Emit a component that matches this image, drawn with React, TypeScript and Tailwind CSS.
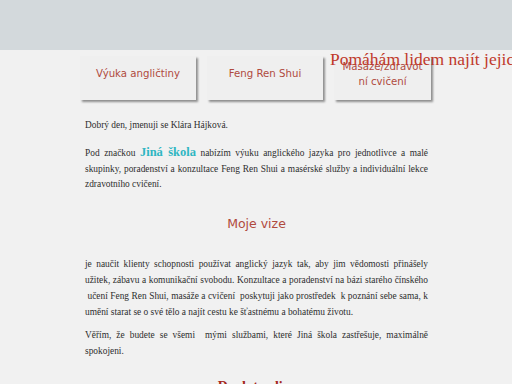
export default function App() {
  const nav = [
    { label: ['Výuka angličtiny'], w: 'w-[116px]' },
    { label: ['Feng Ren Shui'], w: 'w-[116px]' },
    { label: ['Masáže/zdravot', 'ní cvičení'], w: 'w-[97px]' },
  ];

  return (
    <div className="min-h-[384px] bg-[#f1f1f1] overflow-hidden font-['Liberation_Serif',serif]">
      <header className="h-[50px] bg-[#d3d9dc]" />

      <div className="relative">
        <nav className="flex gap-[11px] pl-[80px] pt-[6px]">
          {nav.map((item) => (
            <div
              key={item.label[0]}
              className={`${item.w} h-[44px] pb-[9px] flex flex-col items-center justify-center bg-[#efefef] shadow-[2px_2px_2px_#8f8f8f] text-center text-[10.2px] leading-[15px] text-[#b04a3e] font-['DejaVu_Sans',sans-serif]`}
            >
              {item.label.map((line) => (
                <span key={line}>{line}</span>
              ))}
            </div>
          ))}
        </nav>

        <p className="absolute left-[330px] top-[-2px] whitespace-nowrap text-[17.5px] leading-[22px] text-[#c0392b]">
          Pomáhám lidem najít jejich cestu
        </p>
      </div>

      <main className="w-[343px] ml-[85px] pt-[18px] text-[9.4px] leading-[15.8px] text-[#2e2e2e] text-justify">
        <p>Dobrý den, jmenuji se Klára Hájková.</p>

        <p className="mt-[11px]">
          Pod značkou <span className="text-[12.5px] font-bold text-[#2fb6c2]">Jiná škola</span> nabízím výuku
          anglického jazyka pro jednotlivce a malé skupinky, poradenství a konzultace Feng Ren Shui a masérské služby a
          individuální lekce zdravotního cvičení.
        </p>

        <h2 className="mt-[21px] mb-[23px] text-center text-[12.5px] leading-[20px] text-[#b04a3e] font-['DejaVu_Sans',sans-serif]">
          Moje vize
        </h2>

        <p>
          je naučit klienty schopnosti používat anglický jazyk tak, aby jim vědomosti přinášely užitek, zábavu a
          komunikační svobodu. Konzultace a poradenství na bázi starého čínského &nbsp;učení Feng Ren Shui, masáže a
          cvičení &nbsp;poskytuji jako prostředek &nbsp;k poznání sebe sama, k umění starat se o své tělo a najít cestu
          ke šťastnému a bohatému životu.
        </p>

        <p className="mt-[8px]">
          Věřím, že budete se všemi &nbsp;mými službami, které Jiná škola zastřešuje, maximálně spokojeni.
        </p>

        <h2 className="mt-[19px] text-center text-[14px] font-bold text-[#a4281c]">Duch tradice</h2>
      </main>
    </div>
  );
}
